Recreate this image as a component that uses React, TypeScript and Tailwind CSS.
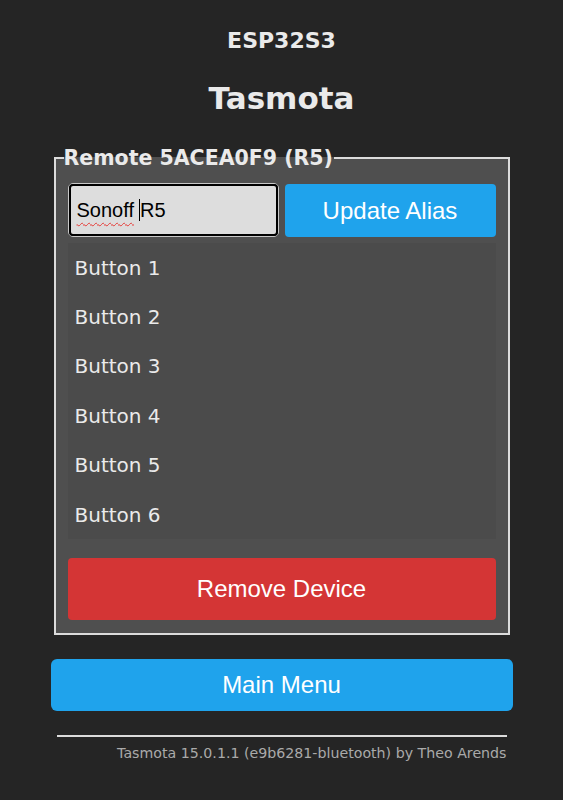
export default function App() {
  const buttons = ['Button 1', 'Button 2', 'Button 3', 'Button 4', 'Button 5', 'Button 6'];

  return (
    <div className="min-h-screen bg-[#252525] text-[#eaeaea] font-['DejaVu_Sans',Verdana,sans-serif]">
      <div className="w-[462px] mx-auto pt-[26px]">
        <div className="text-center font-bold text-[22px] leading-[30px]">ESP32S3</div>
        <div className="text-center font-bold text-[31px] leading-[40px] mt-[22px]">Tasmota</div>

        <fieldset className="mt-[28px] mx-[3px] border-2 border-[#dcdcdc] bg-[#4f4f4f] px-3 pt-[13px] pb-[13px]">
          <legend className="font-bold text-[20.5px] leading-[24px] -ml-[4px] pr-[1px]">
            Remote 5ACEA0F9 (R5)
          </legend>

          <div className="grid grid-cols-2 gap-[6px]">
            <div className="h-[54px] rounded-[5px] border border-[#c8c8c8] p-0">
              <div className="h-full rounded-[4px] border-2 border-black bg-[#dddddd] flex items-center pl-[6px] text-black font-['Liberation_Sans',Arial,sans-serif] text-[20px]">
                <span className="underline decoration-wavy decoration-[#e53935] decoration-1 underline-offset-[5px]">Sonoff</span>
                <span className="ml-[5px] w-px h-[22px] bg-black"></span>
                <span>R5</span>
              </div>
            </div>
            <button className="h-[53px] mt-px rounded-[4px] bg-[#1fa3ec] text-white font-['Liberation_Sans',Arial,sans-serif] text-[24px]">
              Update Alias
            </button>
          </div>

          <div className="mt-[6px] bg-[#4b4b4b]">
            {buttons.map((b) => (
              <div key={b} className="h-[49.4px] flex items-center pl-[7px] text-[20px]">
                {b}
              </div>
            ))}
          </div>

          <button className="mt-[19px] w-full h-[62px] rounded-[4px] bg-[#d43535] text-white font-['Liberation_Sans',Arial,sans-serif] text-[24px]">
            Remove Device
          </button>
        </fieldset>

        <button className="mt-[24px] w-full h-[52px] rounded-md bg-[#1fa3ec] text-white font-['Liberation_Sans',Arial,sans-serif] text-[24px]">
          Main Menu
        </button>

        <div className="mx-[6px] mt-[24px]">
          <div className="h-[2px] bg-[#dcdcdc]"></div>
          <div className="mt-[8px] text-right text-[14.2px] leading-[17px] text-[#aaaaaa]">
            Tasmota 15.0.1.1 (e9b6281-bluetooth) by Theo Arends
          </div>
        </div>
      </div>
    </div>
  );
}
